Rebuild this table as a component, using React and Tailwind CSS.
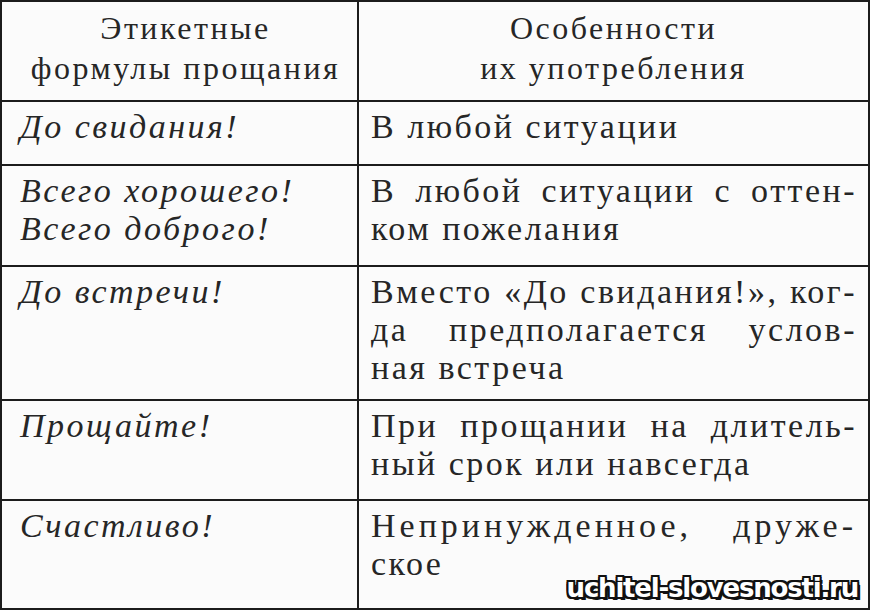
const rows = [
  {
    h: "h-[64px]",
    left: ["До свидания!"],
    right: ["В любой ситуации"],
  },
  {
    h: "h-[101px]",
    left: ["Всего хорошего!", "Всего доброго!"],
    right: ["В любой ситуации с оттен-", "ком пожелания"],
  },
  {
    h: "h-[134px]",
    left: ["До встречи!"],
    right: ["Вместо «До свидания!», ког-", "да предполагается услов-", "ная встреча"],
  },
  {
    h: "h-[100px]",
    left: ["Прощайте!"],
    right: ["При прощании на длитель-", "ный срок или навсегда"],
  },
  {
    h: "flex-1",
    left: ["Счастливо!"],
    right: ["Непринужденное, друже-", "ское"],
    wide: true,
  },
];

const Row = ({ h, left, right, wide }) => (
  <div className={`flex border-t-2 border-[#1c1c1c] ${h}`}>
    <div className="w-[355px] shrink-0 pl-[18px] pt-[6px] italic">
      {left.map((line) => (
        <div key={line} className="whitespace-nowrap">
          {line}
        </div>
      ))}
    </div>
    <div className="flex-1 min-w-0 border-l-2 border-[#1c1c1c] pl-[12px] pr-[11px] pt-[6px]">
      {right.map((line, i) => (
        <div
          key={line}
          className={
            i < right.length - 1
              ? `whitespace-nowrap text-justify [text-align-last:justify] ${wide ? "tracking-[4px]" : ""}`
              : "whitespace-nowrap"
          }
        >
          {line}
        </div>
      ))}
    </div>
  </div>
);

const App = () => {
  return (
    <div className="relative w-[870px] h-[610px] bg-white">
      <div className="flex flex-col w-full h-full border-2 border-[#1c1c1c] bg-[#fbfbfb] text-[#262626] font-['Liberation_Serif',serif] text-[34px] leading-[38px] tracking-[2.5px]">
        <div className="flex h-[98px] text-[32px] leading-[40px]">
          <div className="w-[355px] shrink-0 pl-[12px] pt-[6px] text-center">
            <div>Этикетные</div>
            <div>формулы прощания</div>
          </div>
          <div className="flex-1 border-l-2 border-[#1c1c1c] pt-[6px] text-center">
            <div>Особенности</div>
            <div>их употребления</div>
          </div>
        </div>
        {rows.map((row) => (
          <Row key={row.left[0]} {...row} />
        ))}
      </div>
      <div className="absolute right-[12px] bottom-[9px] font-['DejaVu_Sans',sans-serif] font-bold text-[26px] leading-none tracking-[-1.2px] text-white [text-shadow:2px_2px_0_#111,-2px_-2px_0_#111,2px_-2px_0_#111,-2px_2px_0_#111,0_2px_0_#111,2px_0_0_#111,0_-2px_0_#111,-2px_0_0_#111,3px_3px_0_#111]">
        uchitel-slovesnosti.ru
      </div>
    </div>
  );
};

export default App;
